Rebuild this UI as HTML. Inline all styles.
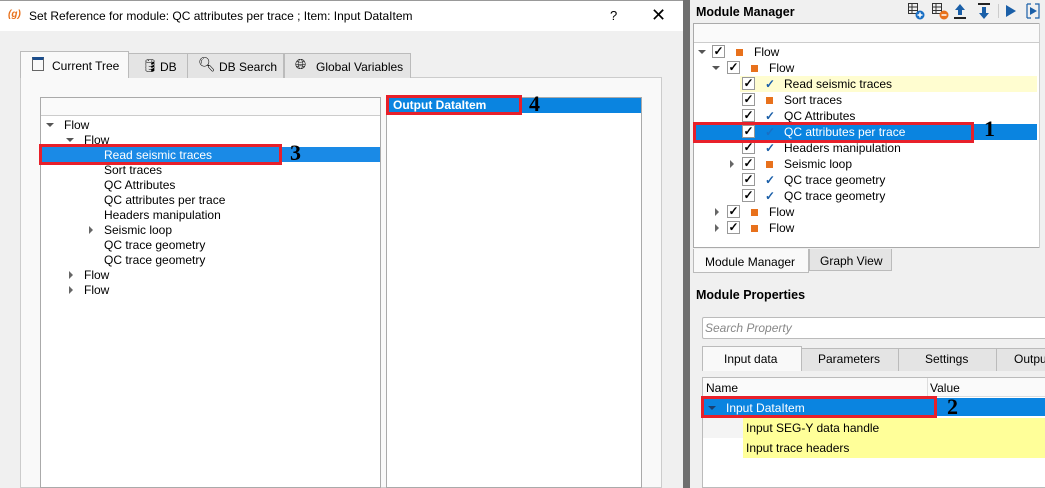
<!DOCTYPE html>
<html><head><meta charset="utf-8"><style>
*{box-sizing:border-box;margin:0;padding:0}
body{width:1045px;height:488px;overflow:hidden;position:relative;background:#f0f0f0;font-family:"Liberation Sans",sans-serif;font-size:12px;color:#000}
.a{position:absolute;white-space:nowrap}
.red{position:absolute;border:3px solid #e8202a}
.num{position:absolute;font-family:"Liberation Serif",serif;font-weight:bold;font-size:22px;line-height:22px}
.tri{position:absolute;width:0;height:0}
.td{border-left:4px solid transparent;border-right:4px solid transparent;border-top:4px solid #555}
.tr{border-top:4px solid transparent;border-bottom:4px solid transparent;border-left:4px solid #666}
.cb{position:absolute;width:13px;height:13px;border:1px solid #999;background:#fff;font-size:12px;line-height:11px;text-align:center;font-weight:bold}
.sq{position:absolute;width:7px;height:7px;background:#e8711c}
.ck{position:absolute;color:#1b5fa8;font-weight:bold;font-size:12px}
.tab{position:absolute;border:1px solid #bbb;border-bottom:none;background:#e4e4e4;text-align:center}
</style></head><body>
<div class="a" style="left:0;top:0;width:683px;height:488px;background:#f0f0f0"></div>
<div class="a" style="left:0;top:0;width:683px;height:31px;background:#fff;border-top:1px solid #999"></div>
<div class="a" style="left:8px;top:9px;color:#e8711c;font-weight:bold;font-size:10px;font-style:italic">(g)</div>
<div class="a" style="left:29px;top:9px;font-size:12px">Set Reference for module: QC attributes per trace ; Item: Input DataItem</div>
<div class="a" style="left:610px;top:8px;font-size:13px">?</div>
<div class="a" style="left:651px;top:5px;font-size:18px;font-weight:300">✕</div>
<div class="a" style="left:20px;top:77px;width:642px;height:411px;background:#f9f9f9;border:1px solid #ccc"></div>
<div class="tab" style="left:128px;top:53px;width:60px;height:25px"></div>
<div class="tab" style="left:187px;top:53px;width:97px;height:25px"></div>
<div class="tab" style="left:284px;top:53px;width:127px;height:25px"></div>
<div class="tab" style="left:20px;top:51px;width:109px;height:27px;background:#f9f9f9"></div>
<div class="a" style="left:32px;top:57px;width:12px;height:14px;border:1px solid #666;border-top:3px solid #1b4d8c"></div>
<div class="a" style="left:52px;top:59px">Current Tree</div>
<div class="a" style="left:142px;top:58px;font-size:13px">🛢</div>
<div class="a" style="left:160px;top:60px">DB</div>
<div class="a" style="left:198px;top:56px;font-size:14px">🔍︎</div>
<div class="a" style="left:219px;top:60px">DB Search</div>
<div class="a" style="left:295px;top:56px;font-size:14px">🌐︎</div>
<div class="a" style="left:316px;top:60px">Global Variables</div>
<div class="a" style="left:40px;top:97px;width:341px;height:391px;background:#fff;border:1px solid #aaa"></div>
<div class="a" style="left:41px;top:98px;width:339px;height:18px;background:#fafafa;border-bottom:1px solid #ccc"></div>
<div class="tri td" style="left:46px;top:123px"></div><div class="a" style="left:64px;top:118px">Flow</div>
<div class="tri td" style="left:66px;top:138px"></div><div class="a" style="left:84px;top:133px">Flow</div>
<div class="a" style="left:41px;top:147px;width:339px;height:15px;background:#1a8ae6"></div>
<div class="a" style="left:104px;top:148px;color:#fff">Read seismic traces</div>
<div class="a" style="left:104px;top:163px">Sort traces</div>
<div class="a" style="left:104px;top:178px">QC Attributes</div>
<div class="a" style="left:104px;top:193px">QC attributes per trace</div>
<div class="a" style="left:104px;top:208px">Headers manipulation</div>
<div class="tri tr" style="left:89px;top:226px"></div><div class="a" style="left:104px;top:223px">Seismic loop</div>
<div class="a" style="left:104px;top:238px">QC trace geometry</div>
<div class="a" style="left:104px;top:253px">QC trace geometry</div>
<div class="tri tr" style="left:69px;top:271px"></div><div class="a" style="left:84px;top:268px">Flow</div>
<div class="tri tr" style="left:69px;top:286px"></div><div class="a" style="left:84px;top:283px">Flow</div>
<div class="red" style="left:39px;top:144px;width:243px;height:21px"></div>
<div class="num" style="left:290px;top:142px">3</div>
<div class="a" style="left:386px;top:97px;width:256px;height:391px;background:#fff;border:1px solid #aaa"></div>
<div class="a" style="left:387px;top:98px;width:254px;height:15px;background:#0a84e0"></div>
<div class="a" style="left:393px;top:98px;color:#fff;font-weight:bold">Output DataItem</div>
<div class="red" style="left:386px;top:95px;width:136px;height:20px"></div>
<div class="num" style="left:529px;top:93px">4</div>
<div class="a" style="left:683px;top:0;width:7px;height:488px;background:#6f6f6f"></div>
<div class="a" style="left:696px;top:5px;font-weight:bold;font-size:12.5px">Module Manager</div>
<svg class="a" style="left:905px;top:1px" width="140" height="20" viewBox="0 0 140 20">
 <g fill="none" stroke="#333" stroke-width="1"><rect x="3.5" y="2.5" width="9" height="10"/><path d="M3.5 6h9M3.5 9.5h9M7 2.5v10"/><rect x="27.5" y="2.5" width="9" height="10"/><path d="M27.5 6h9M27.5 9.5h9M31 2.5v10"/></g>
 <circle cx="15" cy="14" r="4.5" fill="#1a6fc4"/><path d="M12.5 14h5M15 11.5v5" stroke="#fff" stroke-width="1.5"/>
 <circle cx="39" cy="14" r="4.5" fill="#e8711c"/><path d="M36.5 14h5" stroke="#fff" stroke-width="1.5"/>
 <path d="M55 3l-5 6h3v5h4V9h3z" fill="#1a5fa8"/><rect x="49" y="16" width="12" height="2" fill="#222"/>
 <rect x="73" y="2" width="12" height="2" fill="#222"/><path d="M79 18l-5-6h3V6h4v6h3z" fill="#1a5fa8"/>
 <rect x="93" y="3" width="1" height="14" fill="#ccc"/>
 <path d="M101 4l10 6-10 6z" fill="#1a5fa8"/>
 <path d="M122 3v14M122 3h4M122 17h4M130 3h4v14h-4" stroke="#1a5fa8" stroke-width="1.2" fill="none"/><path d="M125 6l7 4-7 4z" fill="#1a5fa8"/>
</svg>
<div class="a" style="left:693px;top:23px;width:347px;height:225px;background:#fff;border:1px solid #aaa"></div>
<div class="a" style="left:694px;top:24px;width:345px;height:19px;background:#fafafa;border-bottom:1px solid #ccc"></div>
<div class="a" style="left:1039px;top:23px;width:6px;height:225px;background:#f0f0f0;border-left:1px solid #ccc"></div>
<div class="a" style="left:740px;top:76px;width:297px;height:16px;background:#fffdd0"></div>
<div class="a" style="left:694px;top:124px;width:343px;height:16px;background:#0a84e0"></div>
<div class="tri td" style="left:698px;top:50px"></div><div class="cb" style="left:712px;top:45px">✓</div><div class="sq" style="left:736px;top:49px"></div><div class="a" style="left:754px;top:45px">Flow</div>
<div class="tri td" style="left:712px;top:66px"></div><div class="cb" style="left:727px;top:61px">✓</div><div class="sq" style="left:751px;top:65px"></div><div class="a" style="left:769px;top:61px">Flow</div>
<div class="cb" style="left:742px;top:77px">✓</div><div class="ck" style="left:765px;top:77px">✓</div><div class="a" style="left:784px;top:77px">Read seismic traces</div>
<div class="cb" style="left:742px;top:93px">✓</div><div class="sq" style="left:766px;top:97px"></div><div class="a" style="left:784px;top:93px">Sort traces</div>
<div class="cb" style="left:742px;top:109px">✓</div><div class="ck" style="left:765px;top:109px">✓</div><div class="a" style="left:784px;top:109px">QC Attributes</div>
<div class="cb" style="left:742px;top:125px">✓</div><div class="ck" style="left:765px;top:125px;color:#1a6fc4">✓</div><div class="a" style="left:784px;top:125px;color:#fff">QC attributes per trace</div>
<div class="cb" style="left:742px;top:141px">✓</div><div class="ck" style="left:765px;top:141px">✓</div><div class="a" style="left:784px;top:141px">Headers manipulation</div>
<div class="tri tr" style="left:730px;top:160px"></div><div class="cb" style="left:742px;top:157px">✓</div><div class="sq" style="left:766px;top:161px"></div><div class="a" style="left:784px;top:157px">Seismic loop</div>
<div class="cb" style="left:742px;top:173px">✓</div><div class="ck" style="left:765px;top:173px">✓</div><div class="a" style="left:784px;top:173px">QC trace geometry</div>
<div class="cb" style="left:742px;top:189px">✓</div><div class="ck" style="left:765px;top:189px">✓</div><div class="a" style="left:784px;top:189px">QC trace geometry</div>
<div class="tri tr" style="left:715px;top:208px"></div><div class="cb" style="left:727px;top:205px">✓</div><div class="sq" style="left:751px;top:209px"></div><div class="a" style="left:769px;top:205px">Flow</div>
<div class="tri tr" style="left:715px;top:224px"></div><div class="cb" style="left:727px;top:221px">✓</div><div class="sq" style="left:751px;top:225px"></div><div class="a" style="left:769px;top:221px">Flow</div>
<div class="red" style="left:693px;top:122px;width:281px;height:21px"></div>
<div class="num" style="left:984px;top:118px">1</div>
<div class="a" style="left:693px;top:249px;width:116px;height:24px;background:#f9f9f9;border:1px solid #bbb;border-top:none"></div>
<div class="a" style="left:705px;top:255px">Module Manager</div>
<div class="a" style="left:809px;top:249px;width:83px;height:22px;background:#e4e4e4;border:1px solid #bbb;border-top:none"></div>
<div class="a" style="left:820px;top:254px">Graph View</div>
<div class="a" style="left:696px;top:288px;font-weight:bold;font-size:12.5px">Module Properties</div>
<div class="a" style="left:702px;top:317px;width:350px;height:22px;background:#fff;border:1px solid #bbb;border-radius:2px"></div>
<div class="a" style="left:705px;top:321px;color:#888;font-style:italic">Search Property</div>
<div class="tab" style="left:801px;top:348px;width:98px;height:23px"></div>
<div class="a" style="left:818px;top:352px">Parameters</div>
<div class="tab" style="left:898px;top:348px;width:99px;height:23px"></div>
<div class="a" style="left:925px;top:352px">Settings</div>
<div class="tab" style="left:996px;top:348px;width:60px;height:23px"></div>
<div class="a" style="left:1014px;top:352px">Outpu</div>
<div class="a" style="left:702px;top:346px;width:100px;height:25px;background:#f9f9f9;border:1px solid #bbb;border-bottom:none"></div>
<div class="a" style="left:724px;top:352px">Input data</div>
<div class="a" style="left:702px;top:377px;width:350px;height:111px;background:#fff;border:1px solid #bbb"></div>
<div class="a" style="left:703px;top:378px;width:345px;height:19px;background:#fafafa;border-bottom:1px solid #ddd"></div>
<div class="a" style="left:927px;top:378px;width:1px;height:19px;background:#ddd"></div>
<div class="a" style="left:706px;top:381px">Name</div>
<div class="a" style="left:930px;top:381px">Value</div>
<div class="a" style="left:703px;top:398px;width:345px;height:18px;background:#0a84e0"></div>
<div class="tri td" style="left:708px;top:406px;border-top-color:#1a3f70"></div>
<div class="a" style="left:726px;top:401px;color:#fff">Input DataItem</div>
<div class="a" style="left:703px;top:418px;width:40px;height:20px;background:#f4f4f4"></div>
<div class="a" style="left:743px;top:418px;width:305px;height:40px;background:#ffff99"></div>
<div class="a" style="left:746px;top:421px">Input SEG-Y data handle</div>
<div class="a" style="left:746px;top:441px">Input trace headers</div>
<div class="red" style="left:701px;top:396px;width:236px;height:22px"></div>
<div class="num" style="left:947px;top:396px">2</div>
</body></html>
